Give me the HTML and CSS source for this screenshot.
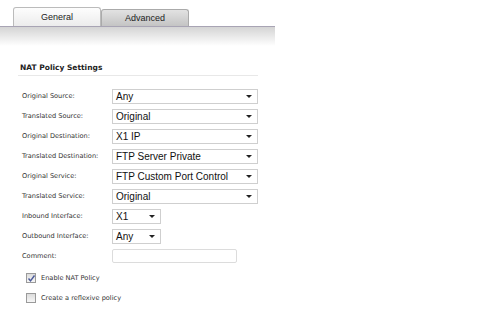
FILE: index.html
```html
<!DOCTYPE html>
<html lang="en">
<head>
    <meta charset="UTF-8">
    <title>NAT Policy</title>
    <link rel="stylesheet" href="styles.css">
</head>
<body>
    <div class="tabs">
        <div class="tab active">General</div>
        <div class="tab">Advanced</div>
    </div>
    <div class="tabbar"></div>

    <div class="settings">
        <h2>NAT Policy Settings</h2>

        <div class="row"><label>Original Source:</label><div class="select"><span>Any</span><i class="arrow"></i></div></div>
        <div class="row"><label>Translated Source:</label><div class="select"><span>Original</span><i class="arrow"></i></div></div>
        <div class="row"><label>Original Destination:</label><div class="select"><span>X1 IP</span><i class="arrow"></i></div></div>
        <div class="row"><label>Translated Destination:</label><div class="select"><span>FTP Server Private</span><i class="arrow"></i></div></div>
        <div class="row"><label>Original Service:</label><div class="select"><span>FTP Custom Port Control</span><i class="arrow"></i></div></div>
        <div class="row"><label>Translated Service:</label><div class="select"><span>Original</span><i class="arrow"></i></div></div>
        <div class="row"><label>Inbound Interface:</label><div class="select small"><span>X1</span><i class="arrow"></i></div></div>
        <div class="row"><label>Outbound Interface:</label><div class="select small"><span>Any</span><i class="arrow"></i></div></div>
        <div class="row"><label>Comment:</label><div class="textbox"></div></div>

        <div class="checks">
            <div class="check">
                <span class="box">
                    <svg width="9" height="9" viewBox="0 0 9 9"><path d="M1.5 4.5 L3.5 6.8 L7.5 1.5" fill="none" stroke="#4a5a9a" stroke-width="1.4"/></svg>
                </span>
                Enable NAT Policy
            </div>
            <div class="check">
                <span class="box"></span>
                Create a reflexive policy
            </div>
        </div>
    </div>
</body>
</html>
```

FILE: styles.css
```css
body {
    margin: 0;
    background: #fff;
    font-family: "DejaVu Sans", Verdana, sans-serif;
    color: #222;
}
.tabs {
    display: flex;
    align-items: flex-end;
    padding-left: 13px;
    height: 26px;
    width: 262px;
}
.tab {
    width: 86px;
    height: 16px;
    line-height: 16px;
    text-align: center;
    font-family: "Liberation Sans", Arial, sans-serif;
    font-size: 9px;
    color: #222;
    border: 1px solid #aaa;
    border-bottom: none;
    border-radius: 3px 3px 0 0;
    background: linear-gradient(#e2e2e2, #c4c4c4);
}
.tab.active {
    height: 18px;
    line-height: 18px;
    background: linear-gradient(#fdfdfd, #ececec);
    border-color: #bbb;
}
.tabbar {
    width: 275px;
    height: 19px;
    border-top: 1px solid #a8a4b4;
    background: linear-gradient(#d4d4d4, #fff);
}
.settings {
    width: 240px;
    padding: 17px 0 0 18px;
}
h2 {
    margin: 0 0 10px 0;
    padding: 0 0 3px 2px;
    font-size: 7.5px;
    font-weight: bold;
    color: #222;
    border-bottom: 1px solid #e8e8e8;
}
.row {
    display: flex;
    align-items: center;
    height: 20px;
}
.row label {
    width: 90px;
    padding-left: 4px;
    font-size: 6.6px;
    color: #333;
}
.select {
    display: flex;
    align-items: center;
    justify-content: space-between;
    box-sizing: border-box;
    width: 146px;
    height: 15px;
    padding: 0 5px 0 3px;
    border: 1px solid #cfcfcf;
    background: #fff;
    font-family: "Liberation Sans", Arial, sans-serif;
    font-size: 10px;
    color: #111;
}
.select.small {
    width: 49px;
}
.arrow {
    width: 0;
    height: 0;
    border-left: 3px solid transparent;
    border-right: 3px solid transparent;
    border-top: 3px solid #222;
    margin-top: 1px;
}
.textbox {
    box-sizing: border-box;
    width: 125px;
    height: 14px;
    border: 1px solid #dcdcdc;
    border-radius: 2px;
}
.checks {
    padding-top: 2px;
}
.check {
    display: flex;
    align-items: center;
    height: 20px;
    padding-left: 8px;
    font-size: 6.6px;
    color: #333;
}
.box {
    display: inline-block;
    box-sizing: border-box;
    width: 10px;
    height: 10px;
    margin-right: 5px;
    border: 1px solid #9a9a9a;
    background: linear-gradient(#dcdcdc, #f6f6f6);
}
.box svg {
    display: block;
}
```
